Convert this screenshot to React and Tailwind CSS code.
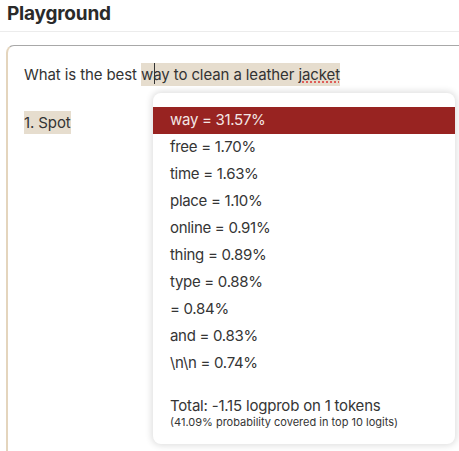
const logits = [
  ['way', '31.57%'],
  ['free', '1.70%'],
  ['time', '1.63%'],
  ['place', '1.10%'],
  ['online', '0.91%'],
  ['thing', '0.89%'],
  ['type', '0.88%'],
  ['', '0.84%'],
  ['and', '0.83%'],
  ['\\n\\n', '0.74%'],
]

function LogitPopup() {
  return (
    <div className="absolute left-[145px] top-[47px] w-[302px] h-[351px] rounded-lg bg-white shadow-[0_0_6px_2px_rgba(0,0,0,0.12)] pt-[14px] tracking-[-0.3px]">
      {logits.map(([tok, p], i) => (
        <div key={i}
          className={`h-[27px] flex items-center pl-[17px] text-[15px] ${i === 0 ? 'bg-[#982321] text-[#f3e6e4]' : 'text-[#353535]'}`}>
          {tok} = {p}
        </div>
      ))}
      <div className="pl-[17px] mt-[20px] text-[15px] leading-[18px] text-[#353535] tracking-[-0.2px]">Total: -1.15 logprob on 1 tokens</div>
      <div className="pl-[17px] text-[11px] leading-[15px] text-[#353535] tracking-[0px]">(41.09% probability covered in top 10 logits)</div>
    </div>
  )
}

export default function App() {
  return (
    <div className="w-[459px] h-[451px] overflow-hidden bg-white font-['Inter',sans-serif] text-[#333]">
      <div className="h-[32px] border-b border-[#ececec] pl-[7px] pt-[1px]">
        <h1 className="text-[19px] font-bold tracking-[-0.2px] text-[#2a2a2a] leading-[26px]">Playground</h1>
      </div>
      <div className="mt-[13px] ml-[6px] -mr-4 h-[420px] rounded-tl-lg border-t border-t-[#a8a8a8] border-l-2 border-l-[#e4d5bd] relative">
        <div className="pl-[16px] pt-[19px] text-[15px] leading-[20px] text-[#333] tracking-[-0.1px]">
          What is the best <span className="relative bg-[#e6ddce] py-[2px]">w<span className="absolute left-[13px] top-0 h-[21px] w-px bg-[#333]" />ay to clean a leather <span className="underline decoration-dotted decoration-[#d33] underline-offset-2">jacket</span></span>
        </div>
        <div className="pl-[16px] pt-[28px] text-[15px] leading-[20px] tracking-[-0.1px]">
          <span className="bg-[#e6ddce] py-[2px]">1. Spot</span>
        </div>
        <LogitPopup />
      </div>
    </div>
  )
}
